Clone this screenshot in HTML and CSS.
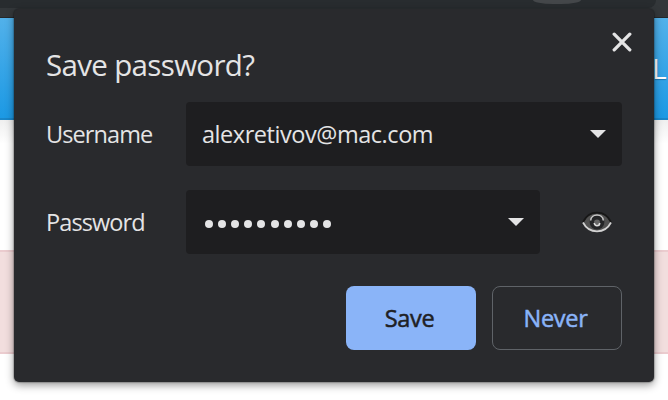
FILE: index.html
```html
<!DOCTYPE html>
<html lang="en">
<head>
<meta charset="utf-8">
<title>Save password?</title>
<link rel="stylesheet" href="styles.css">
</head>
<body>
<div class="page">
  <div class="toolbar"><div class="omnibox"><span class="chip"></span></div></div>
  <header class="site-header"><span>L</span></header>
  <main class="content"><div class="alert"></div></main>
</div>
<section class="dialog">
  <button class="close" aria-label="Close">
    <svg width="20" height="20" viewBox="0 0 20 20"><path d="M2.200 2.200 17.800 17.800M17.800 2.200 2.200 17.800" stroke="#e4e4e5" stroke-width="3.300" stroke-linecap="round"/></svg>
  </button>
  <h1>Save password?</h1>
  <div class="row">
    <label>Username</label>
    <div class="field"><span class="value">alexretivov@mac.com</span><svg class="arrow" width="16" height="8"><path d="M0 0h16L8 8z" fill="#e4e4e5"/></svg></div>
  </div>
  <div class="row">
    <label>Password</label>
    <div class="field"><span class="dots"><i></i><i></i><i></i><i></i><i></i><i></i><i></i><i></i><i></i><i></i></span><svg class="arrow" width="16" height="8"><path d="M0 0h16L8 8z" fill="#e4e4e5"/></svg></div>
    <svg class="eye" width="30" height="22" viewBox="0 0 30 22">
      <path d="M1 11.500C7-.5 23-.5 29 11.500 23 23.500 7 23.500 1 11.500z" fill="#505050"/>
      <path d="M1 11C7-1.500 23-1.500 29 11" fill="none" stroke="#171717" stroke-width="1.800"/>
      <circle cx="15" cy="11" r="7.400" fill="#242527"/>
      <path d="M8.700 9.500C9 2.300 21 2.300 21.300 9.500" fill="none" stroke="#c9c9c9" stroke-width="1.500"/>
      <circle cx="15" cy="11.500" r="3" fill="#666"/>
      <path d="M12.300 12a2.700 2.700 0 0 0 5.400 0" fill="none" stroke="#ddd" stroke-width="1.600"/>
      <path d="M1 11.500C7 23.200 23 23.200 29 11.500" fill="none" stroke="#d2d2d2" stroke-width="1.700"/>
    </svg>
  </div>
  <div class="actions"><button class="save">Save</button><button class="never">Never</button></div>
</section>
</body>
</html>
```
FILE: styles.css
```css
* { box-sizing: border-box; }
body {
  margin: 0;
  width: 668px;
  height: 400px;
  overflow: hidden;
  background: #fff;
  font-family: "Open Sans", "Noto Sans", sans-serif;
  color: #e4e4e5;
}
.page { height: 400px; }
.toolbar { height: 18px; background: #33373a; border-bottom: 1px solid #24282b; }
.omnibox {
  width: 656px;
  height: 8px;
  padding-left: 533px;
  background: #282c2f;
  border-radius: 0 0 20px 0;
}
.chip { display: block; width: 48px; height: 4px; background: #44474a; border-radius: 0 0 20px 20px / 0 0 4px 4px; }
.site-header {
  height: 102px;
  padding: 33px 0 0 652px;
  background: linear-gradient(#52b1ea, #1c99e4);
  border-bottom: 2px solid #1a87ca;
  color: #fff;
  font-size: 28px;
  line-height: 34px;
  white-space: nowrap;
  text-shadow: 0 1px 1px #1a76b0;
}
.content { height: 280px; padding-top: 130px; background: linear-gradient(#efefef, #fff 24px); }
.alert { height: 104px; background: #f2dede; border: solid #ebcccf; border-width: 2px 0; }
.dialog {
  position: absolute;
  left: 14px;
  top: 9px;
  width: 640px;
  height: 373px;
  padding: 34px 32px 32px;
  background: #292a2d;
  border-radius: 5px;
  box-shadow: 0 0 1px 1px rgba(0,0,0,.2), 0 3px 9px rgba(0,0,0,.42);
}
button { font: inherit; padding: 0; border: 0; }
.close { position: absolute; right: 22px; top: 23px; width: 20px; height: 20px; background: none; }
.close svg { display: block; }
h1 { margin: 0 0 15px; height: 44px; font-size: 29.5px; line-height: 44px; font-weight: 400; letter-spacing: -.66px; white-space: nowrap; }
.row { display: flex; align-items: center; height: 64px; margin-bottom: 24px; }
label { width: 140px; flex: none; font-size: 23.5px; line-height: 32px; letter-spacing: -.9px; }
.field {
  flex: 1;
  height: 64px;
  display: flex;
  align-items: center;
  justify-content: space-between;
  padding: 0 16px;
  background: #1e1e20;
  border-radius: 4px;
}
.value { font-size: 23.5px; line-height: 32px; letter-spacing: -.45px; white-space: nowrap; }
.dots { display: flex; gap: 5.200px; padding: 3px 0 0 2.700px; }
.dots i { width: 8px; height: 8px; border-radius: 50%; background: #e4e4e5; }
.eye { margin: 0 10px 0 42px; flex: none; }
.actions { display: flex; justify-content: flex-end; gap: 16px; padding-top: 8px; }
.actions button { width: 130px; height: 64px; border-radius: 8px; font-size: 23.5px; -webkit-text-stroke: .5px currentColor; letter-spacing: -.3px; padding: 0 3px 1px 0; }
.save { background: #8ab4f8; color: #202124; }
.never { background: transparent; border: 1px solid #5f6368 !important; color: #8ab4f8; }
```
